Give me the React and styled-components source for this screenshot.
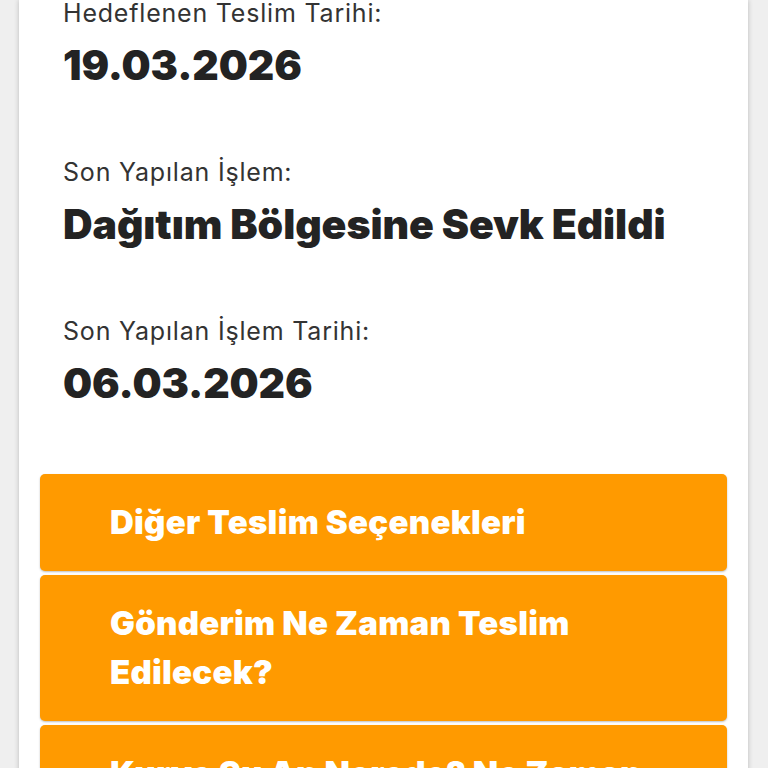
import styled, { createGlobalStyle } from "styled-components";

const GlobalStyle = createGlobalStyle`
  html, body {
    margin: 0;
    padding: 0;
    overflow: hidden;
    background: #efefef;
    font-family: Inter, "Liberation Sans", sans-serif;
  }
`;

const details = [
  { label: "Hedeflenen Teslim Tarihi:", value: "19.03.2026" },
  { label: "Son Yapılan İşlem:", value: "Dağıtım Bölgesine Sevk Edildi" },
  { label: "Son Yapılan İşlem Tarihi:", value: "06.03.2026" },
];

const actions = [
  "Diğer Teslim Seçenekleri",
  "Gönderim Ne Zaman Teslim Edilecek?",
  "Kurye Şu An Nerede? Ne Zaman Gelecek?",
];

function App() {
  return (
    <>
      <GlobalStyle />
      <Page>
        <Card>
          <DetailList>
            {details.map((d) => (
              <DetailItem key={d.label}>
                <DetailLabel>{d.label}</DetailLabel>
                <DetailValue>{d.value}</DetailValue>
              </DetailItem>
            ))}
          </DetailList>
          <ActionList>
            {actions.map((a) => (
              <ActionButton key={a}>{a}</ActionButton>
            ))}
          </ActionList>
        </Card>
      </Page>
    </>
  );
}

const Page = styled.div`
  display: flex;
  padding: 0 20px 0 19px;
  min-height: 100vh;
`;

const Card = styled.div`
  flex: 1;
  display: flex;
  flex-direction: column;
  background: #ffffff;
  padding: 0 21px 40px;
  box-shadow: 0 0 5px rgba(0, 0, 0, 0.22);
`;

const DetailList = styled.div`
  display: flex;
  flex-direction: column;
  gap: 69px;
  padding-left: 23px;
`;

const DetailItem = styled.div`
  display: flex;
  flex-direction: column;
`;

const DetailLabel = styled.div`
  font-size: 25px;
  line-height: 26px;
  letter-spacing: 0.8px;
  color: #333333;
  font-weight: 400;
`;

const DetailValue = styled.div`
  margin-top: 14px;
  font-size: 41px;
  line-height: 50px;
  font-weight: 900;
  color: #232323;
  letter-spacing: -0.1px;
`;

const ActionList = styled.div`
  display: flex;
  flex-direction: column;
  gap: 4px;
  margin-top: 66px;
`;

const ActionButton = styled.div`
  background: #ff9a00;
  border-radius: 5px;
  box-shadow: 0 1px 2px rgba(0, 0, 0, 0.25);
  color: #ffffff;
  font-size: 33px;
  line-height: 49px;
  font-weight: 900;
  letter-spacing: 0.25px;
  padding: 24px 50px 24px 70px;
`;

export default App;
